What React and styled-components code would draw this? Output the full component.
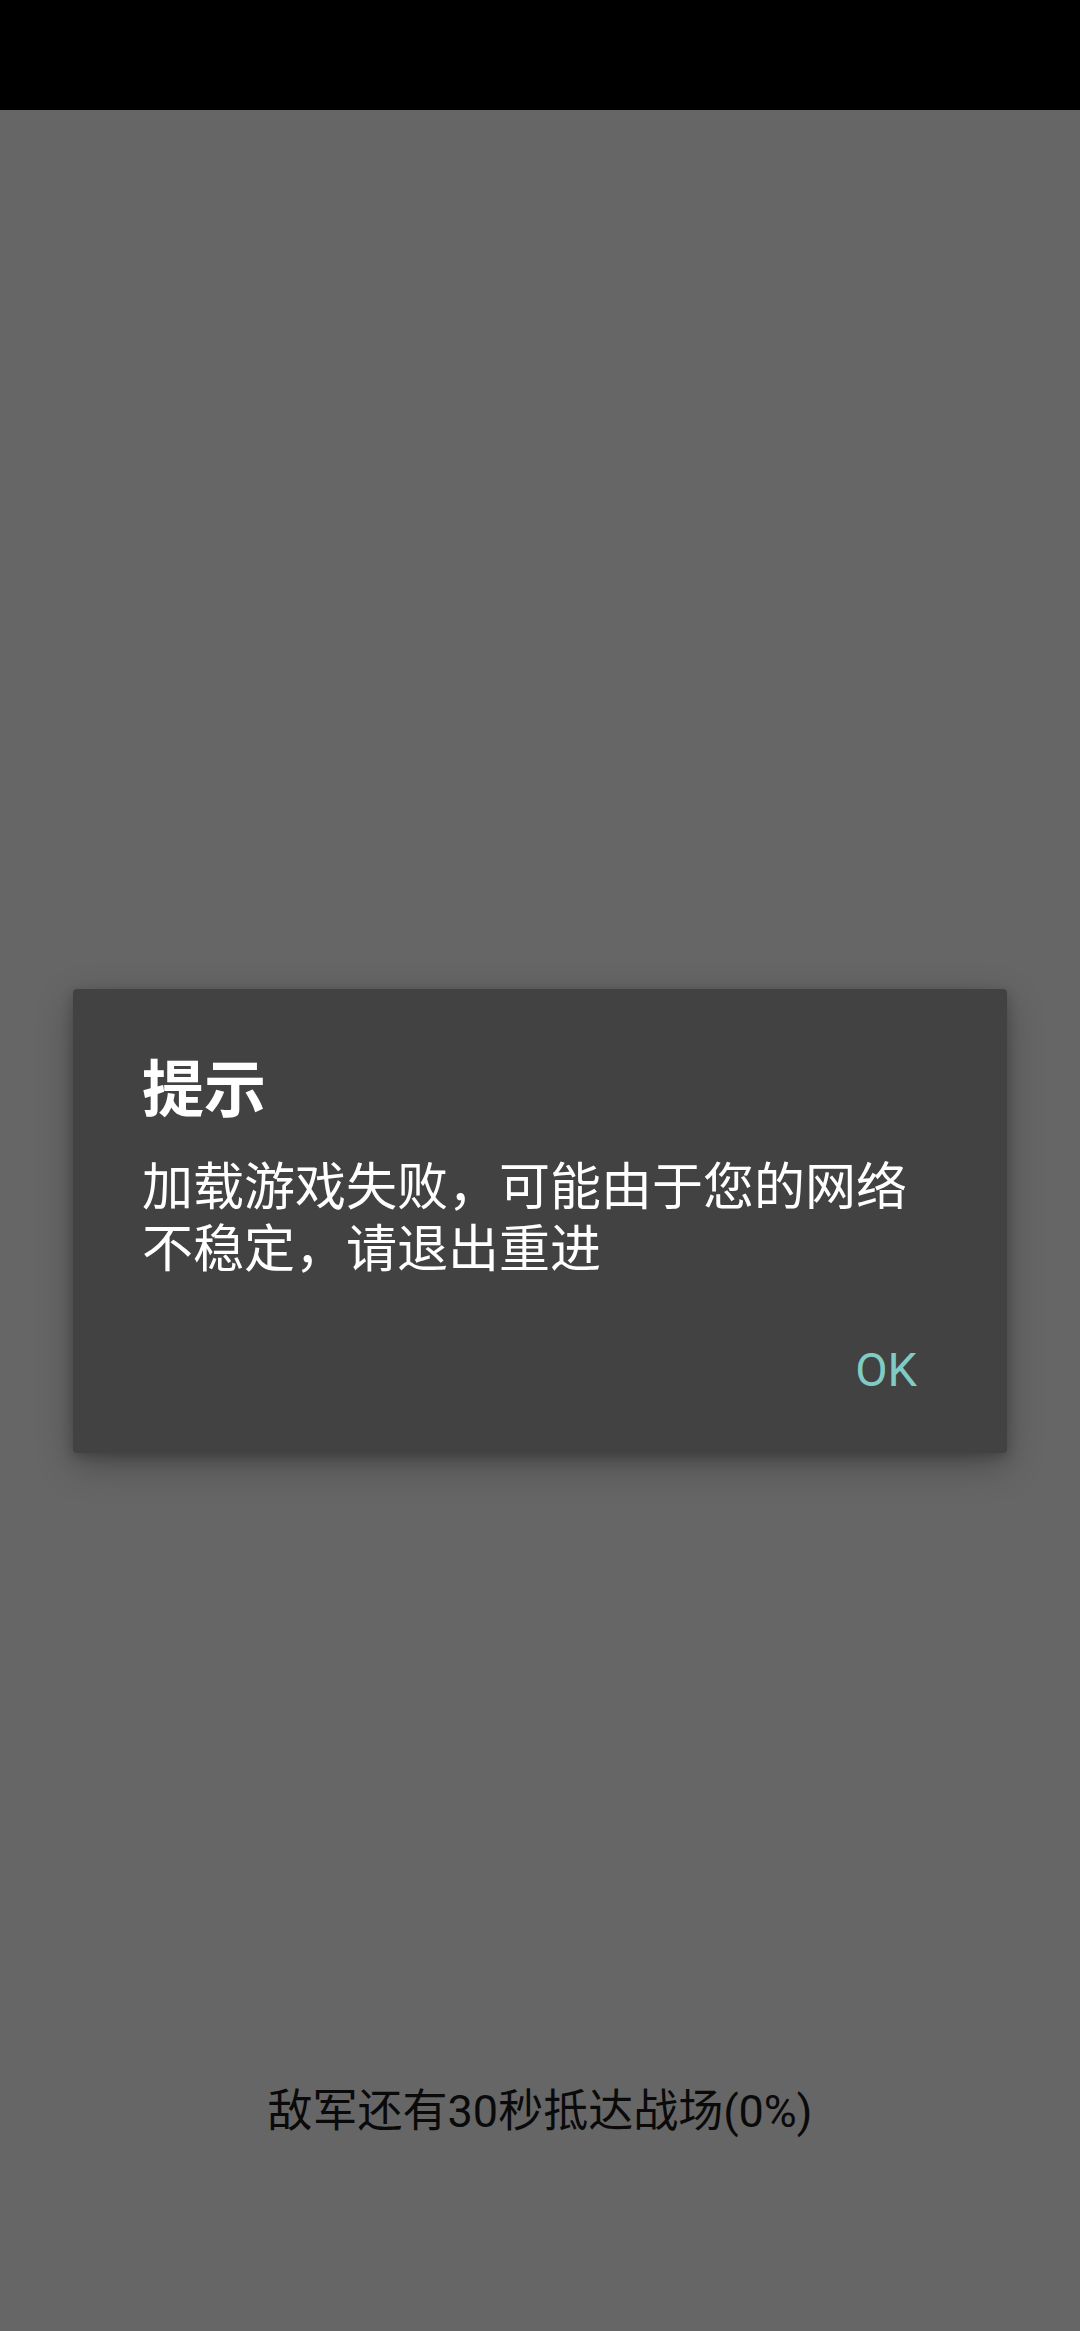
import React from "react";
import styled, { createGlobalStyle } from "styled-components";

const Global = createGlobalStyle`
  html, body { margin: 0; padding: 0; background: #666666; }
  body { font-family: "Noto Sans CJK SC", "Noto Sans", sans-serif; }
  * { box-sizing: border-box; }
`;

const Screen = styled.div`
  position: relative;
  width: 1080px;
  height: 2331px;
  display: flex;
  flex-direction: column;
  background: #666666;
  overflow: hidden;
`;

const StatusBar = styled.div`
  height: 110px;
  flex: none;
  background: #000000;
`;

const GameArea = styled.main`
  flex: 1;
  display: flex;
  flex-direction: column;
  justify-content: flex-end;
  align-items: center;
  padding-bottom: 193px;
`;

const LoadingText = styled.p`
  margin: 0;
  font-family: Roboto, "Noto Sans CJK SC", sans-serif;
  font-size: 45px;
  line-height: 53px;
  color: #0a0a0a;
`;

const Overlay = styled.div`
  position: absolute;
  left: 0;
  right: 0;
  top: 110px;
  bottom: 0;
  display: flex;
  align-items: center;
  justify-content: center;
`;

const Dialog = styled.div`
  width: 934px;
  background: #424242;
  border-radius: 4px;
  box-shadow: 0 12px 36px rgba(0, 0, 0, 0.28), 0 4px 12px rgba(0, 0, 0, 0.2);
  padding: 59px 69px 56px 69px;
  display: flex;
  flex-direction: column;
`;

const Title = styled.h2`
  margin: 0;
  font-family: "Noto Sans CJK SC", sans-serif;
  font-weight: 700;
  font-size: 62px;
  line-height: 74px;
  color: #ffffff;
`;

const Message = styled.p`
  margin: 30px 0 0 0;
  font-family: "Noto Sans CJK SC", sans-serif;
  font-size: 51px;
  line-height: 62px;
  color: #ffffff;
`;

const Actions = styled.div`
  margin-top: 66px;
  display: flex;
  justify-content: flex-end;
  padding-right: 21px;
`;

const TextButton = styled.button`
  border: none;
  background: transparent;
  padding: 0;
  font-family: Roboto, "Noto Sans", sans-serif;
  font-size: 47px;
  line-height: 55px;
  font-weight: 400;
  color: #80cbc4;
  cursor: pointer;
`;

export default function App() {
  return (
    <>
      <Global />
      <Screen>
        <StatusBar />
        <GameArea>
          <LoadingText>敌军还有30秒抵达战场(0%)</LoadingText>
        </GameArea>
        <Overlay>
          <Dialog>
            <Title>提示</Title>
            <Message>加载游戏失败，可能由于您的网络不稳定，请退出重进</Message>
            <Actions>
              <TextButton>OK</TextButton>
            </Actions>
          </Dialog>
        </Overlay>
      </Screen>
    </>
  );
}
